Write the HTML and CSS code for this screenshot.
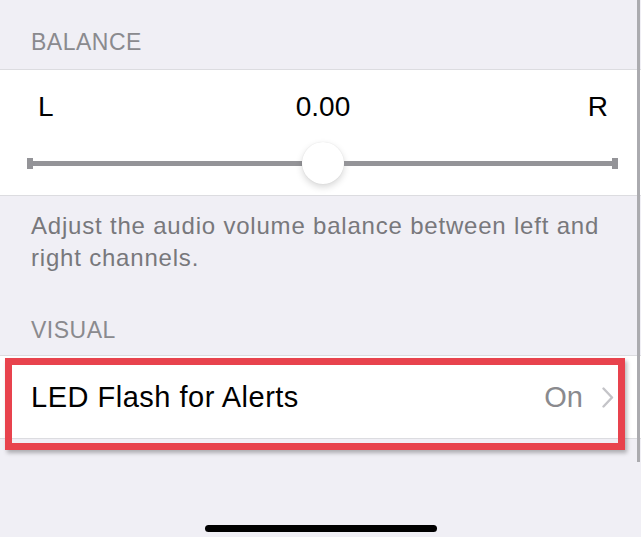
FILE: index.html
```html
<!DOCTYPE html>
<html lang="en">

<head>
    <meta charset="UTF-8">
    <meta name="viewport" content="width=device-width, initial-scale=1.0">
    <title>Audio / Visual</title>
    <link rel="stylesheet" href="styles.css">
</head>

<body>
    <div class="screen">
        <div class="scroll-line"></div>

        <div class="group-header">BALANCE</div>
        <section class="group">
            <div class="balance-labels">
                <span>L</span>
                <span class="balance-value">0.00</span>
                <span class="right">R</span>
            </div>
            <div class="slider">
                <span class="cap"></span>
                <span class="track"></span>
                <span class="thumb"></span>
                <span class="track"></span>
                <span class="cap"></span>
            </div>
        </section>
        <p class="group-footer">Adjust the audio volume balance between left and right channels.</p>

        <div class="group-header visual">VISUAL</div>
        <section class="group cell-wrap">
            <div class="cell">
                <span class="cell-title">LED Flash for Alerts</span>
                <span class="cell-detail">On</span>
                <svg class="chevron" width="12" height="21" viewBox="0 0 12 21">
                    <polyline points="1.5,1.5 10,10.5 1.5,19.5" fill="none" stroke="#c4c4c8" stroke-width="2.4" stroke-linecap="round" stroke-linejoin="round"/>
                </svg>
            </div>
            <!-- annotation box -->
            <div class="highlight"></div>
        </section>

        <div class="home-bar"></div>
    </div>
</body>

</html>
```

FILE: styles.css
```css
* {
    box-sizing: border-box;
    margin: 0;
}

body {
    background-color: #f0eff5;
    font-family: "Liberation Sans", Arial, sans-serif;
}

.screen {
    position: relative;
    display: flex;
    flex-direction: column;
    min-height: 537px;
}

.scroll-line {
    position: absolute;
    top: 0;
    right: 1px;
    width: 3px;
    height: 462px;
    background-color: #ababaf;
    z-index: 2;
}

.group-header {
    padding: 28px 31px 13px;
    font-size: 23px;
    line-height: 28px;
    letter-spacing: 0.5px;
    color: #8a8a8e;
}

.group-header.visual {
    padding-top: 42px;
    padding-bottom: 11px;
}

.group {
    background-color: #fff;
    border-top: 1px solid #dcdce0;
    border-bottom: 1px solid #dcdce0;
}

.balance-labels {
    display: grid;
    grid-template-columns: 1fr auto 1fr;
    padding: 21px 33px 0 38px;
    font-size: 28px;
    line-height: 32px;
    color: #000;
}

.balance-labels .right {
    text-align: right;
}

.slider {
    display: flex;
    align-items: center;
    height: 44px;
    margin: 18px 23px 10px 27px;
}

.slider .cap {
    width: 6px;
    height: 11px;
    background-color: #949498;
}

.slider .track {
    flex: 1;
    height: 5px;
    background-color: #949498;
}

.slider .thumb {
    width: 42px;
    height: 42px;
    border-radius: 50%;
    background-color: #fff;
    box-shadow: 0 3px 7px rgba(0, 0, 0, 0.16), 0 0 1px rgba(0, 0, 0, 0.12);
}

.group-footer {
    padding: 14px 31px 0;
    font-size: 24px;
    line-height: 32px;
    letter-spacing: 0.8px;
    color: #78787c;
}

.cell-wrap {
    position: relative;
}

.cell {
    display: flex;
    align-items: center;
    height: 82px;
    padding: 0 27px 0 31px;
    font-size: 29px;
}

.cell-title {
    flex: 1;
    color: #000;
    letter-spacing: 0.5px;
}

.cell-detail {
    color: #8a8a8e;
    margin-right: 19px;
}

.highlight {
    position: absolute;
    top: 2px;
    left: 5px;
    width: 620px;
    height: 92px;
    border: 7px solid #e8434d;
    box-shadow: 2px 3px 4px rgba(0, 0, 0, 0.28);
}

.home-bar {
    width: 232px;
    height: 7px;
    margin: auto auto 5px;
    border-radius: 4px;
    background-color: #000;
}
```
